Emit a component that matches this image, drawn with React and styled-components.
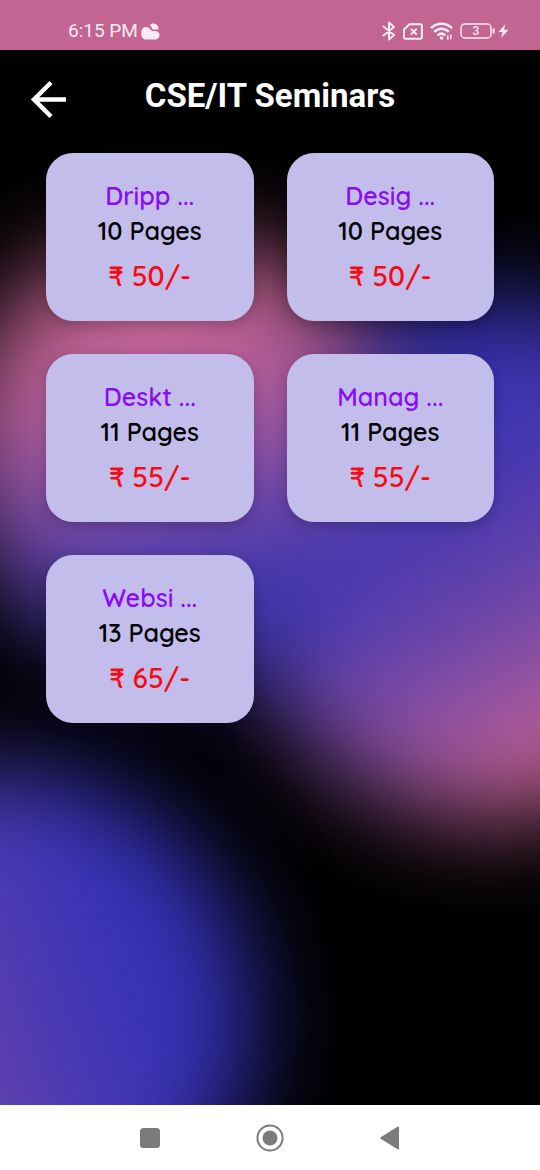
import React from "react";
import styled, { createGlobalStyle } from "styled-components";

const GlobalStyle = createGlobalStyle`
  *, *::before, *::after { box-sizing: border-box; }
  body { margin: 0; background: #000; }
  button { font: inherit; color: inherit; background: none; border: 0; padding: 0; cursor: pointer; }
`;

const Screen = styled.div`
  display: flex;
  flex-direction: column;
  min-height: 100vh;
  font-family: Roboto, sans-serif;
`;

const StatusBar = styled.div`
  display: flex;
  align-items: flex-end;
  justify-content: space-between;
  height: 50px;
  padding: 0 31px 8px 68px;
  background: #c36593;
  color: #fbeaf4;
`;

const StatusGroup = styled.div`
  display: flex;
  align-items: center;
  gap: ${({ $gap }) => $gap}px;
  height: 22px;
  svg { display: block; }
`;

const Clock = styled.time`
  font-size: 19px;
  line-height: 24px;
`;

const Page = styled.main`
  position: relative;
  isolation: isolate;
  flex: 1;
  background: #000;
`;

const Backdrop = styled.svg`
  position: absolute;
  inset: 0;
  width: 100%;
  height: 100%;
  z-index: -1;
`;

const Header = styled.header`
  display: grid;
  grid-template-columns: 1fr auto 1fr;
  align-items: center;
  height: 97px;
  padding: 0 30px;
`;

const BackButton = styled.button`
  justify-self: start;
  width: 38px;
  height: 40px;
  svg { display: block; }
`;

const Title = styled.h1`
  margin: 0;
  padding-bottom: 6px;
  color: #fff;
  font-size: 33px;
  line-height: 40px;
  font-weight: 700;
`;

const CardGrid = styled.ul`
  display: grid;
  grid-template-columns: 1fr 1fr;
  gap: 33px;
  margin: 0;
  padding: 6px 46px 33px;
  list-style: none;
`;

const Card = styled.a`
  display: flex;
  flex-direction: column;
  align-items: center;
  height: 168px;
  padding-top: 25px;
  border-radius: 27px;
  background: #c3bdeb;
  box-shadow: 0 4px 14px rgba(0, 0, 0, 0.22);
  font-family: Quicksand, Lato, "Noto Sans", sans-serif;
  text-decoration: none;
`;

const CardText = styled.span`
  color: ${({ $color }) => $color};
  font-size: 25px;
  line-height: 35px;
  font-weight: 600;
`;

const Price = styled(CardText)`
  font-size: 28px;
  line-height: 55px;
`;

const SystemNav = styled.nav`
  display: flex;
  justify-content: center;
  height: 65px;
  background: #fff;
  color: #7b7b7b;
`;

const NavButton = styled.button`
  display: flex;
  align-items: center;
  justify-content: center;
  width: 120px;
`;

const seminars = [
  { name: "Dripp ...", pages: 10, price: 50 },
  { name: "Desig ...", pages: 10, price: 50 },
  { name: "Deskt ...", pages: 11, price: 55 },
  { name: "Manag ...", pages: 11, price: 55 },
  { name: "Websi ...", pages: 13, price: 65 },
];

function GlowBackdrop() {
  return (
    <Backdrop viewBox="0 0 540 1055" preserveAspectRatio="xMidYMid slice" aria-hidden="true">
      <defs>
        <filter id="soft" x="-50%" y="-50%" width="200%" height="200%" colorInterpolationFilters="sRGB">
          <feGaussianBlur stdDeviation="48" />
        </filter>
        <linearGradient id="glowA" gradientUnits="userSpaceOnUse" x1="160" y1="210" x2="230" y2="560">
          <stop offset="0" stopColor="#c86694" />
          <stop offset="0.25" stopColor="#c46496" />
          <stop offset="0.5" stopColor="#9a559e" />
          <stop offset="0.78" stopColor="#5a40aa" />
          <stop offset="1" stopColor="#3c35b2" />
        </linearGradient>
        <linearGradient id="glowB" gradientUnits="userSpaceOnUse" x1="380" y1="300" x2="600" y2="715">
          <stop offset="0" stopColor="#3431b2" />
          <stop offset="0.3" stopColor="#4236b2" />
          <stop offset="0.58" stopColor="#6543aa" />
          <stop offset="0.82" stopColor="#a0569e" />
          <stop offset="1" stopColor="#d46890" />
        </linearGradient>
        <linearGradient id="glowC" gradientUnits="userSpaceOnUse" x1="-60" y1="1040" x2="165" y2="960">
          <stop offset="0" stopColor="#6a45aa" />
          <stop offset="0.5" stopColor="#4c3ab2" />
          <stop offset="1" stopColor="#3431b8" />
        </linearGradient>
      </defs>
      <circle cx="488" cy="508" r="260" fill="url(#glowB)" filter="url(#soft)" />
      <circle cx="172" cy="402" r="215" fill="url(#glowA)" filter="url(#soft)" />
      <circle cx="0" cy="970" r="252" fill="url(#glowC)" filter="url(#soft)" />
    </Backdrop>
  );
}

function CloudIcon() {
  return (
    <svg width="19" height="17" viewBox="0 0 19 17" fill="currentColor" aria-hidden="true">
      <path d="M5 16.500A4.600 4.600 0 0 1 .4 11.900V8.600A4.600 4.600 0 0 1 5 4c2.300 0 3.800 1.100 4.700 2.800.7 1.200 1.900 1.500 3.700 1.200 3.100-.4 5.100 1.500 5.100 4.200 0 2.500-1.900 4.300-4.400 4.300Z" />
      <path d="M8.800 2C11.400-.9 17 .2 17.500 5.200c.1 1.200-.5 1.500-1.400 1.300-1.100-.2-1.700-.1-2.800 0-1.200.1-2-.3-2.500-1.500-.4-1.100-1-2.100-2-3Z" />
    </svg>
  );
}

function BluetoothIcon() {
  return (
    <svg width="14" height="20" viewBox="0 0 14 20" fill="none" stroke="currentColor" strokeWidth="2" strokeLinejoin="round" strokeLinecap="round" aria-hidden="true">
      <path d="M1.500 5.500 12 14l-5 4.500v-17L12 6 1.500 14.500" />
    </svg>
  );
}

function SimIcon() {
  return (
    <svg width="20" height="17" viewBox="0 0 20 17" fill="none" stroke="currentColor" strokeWidth="2" strokeLinejoin="round" aria-hidden="true">
      <path d="M6.500 1.200H17.500A1.400 1.400 0 0 1 18.900 2.600V14.400A1.400 1.400 0 0 1 17.500 15.800H2.400A1.400 1.400 0 0 1 1 14.400V6.500Z" />
      <path d="m7.800 5.600 6 6m0-6-6 6" />
    </svg>
  );
}

function WifiIcon() {
  return (
    <svg width="23" height="18" viewBox="0 0 23 18" fill="none" stroke="currentColor" strokeWidth="2.500" aria-hidden="true">
      <path d="M1 6.200C7 .3 16 .3 22 6.200M4.200 9.900c4.200-4.200 10.400-4.200 14.600 0M7.600 13.400c2.400-2.200 5.400-2.200 7.800 0" />
      <circle cx="11.500" cy="16" r="1.800" fill="currentColor" stroke="none" />
      <path d="M17.800 17.800v-4.600M20.800 12.600v4.600" strokeWidth="1.600" />
    </svg>
  );
}

function BatteryIcon() {
  return (
    <svg width="35" height="16" viewBox="0 0 35 16" fill="none" stroke="currentColor" strokeWidth="1.500" aria-hidden="true">
      <rect x="1" y="1" width="30" height="14" rx="4" />
      <path d="M33.600 5.500v5" strokeWidth="2" />
      <text x="16" y="12" textAnchor="middle" fontFamily="Roboto" fontSize="12" fontWeight="500" fill="currentColor" stroke="none">3</text>
    </svg>
  );
}

function BoltIcon() {
  return (
    <svg width="11" height="14" viewBox="0 0 11 14" fill="currentColor" aria-hidden="true">
      <path d="M7.500 0 .5 8h4L3 14l7.500-8.300H6Z" />
    </svg>
  );
}

export default function App() {
  return (
    <>
      <GlobalStyle />
      <Screen>
        <StatusBar>
          <StatusGroup $gap={3}>
            <Clock>6:15 PM</Clock>
            <CloudIcon />
          </StatusGroup>
          <StatusGroup $gap={7}>
            <BluetoothIcon />
            <SimIcon />
            <WifiIcon />
            <StatusGroup $gap={3}>
              <BatteryIcon />
              <BoltIcon />
            </StatusGroup>
          </StatusGroup>
        </StatusBar>
        <Page>
          <GlowBackdrop />
          <Header>
            <BackButton type="button" aria-label="Back">
              <svg width="38" height="40" viewBox="0 0 38 40" fill="none" stroke="#fff" strokeWidth="4.500" aria-hidden="true">
                <path d="M36 20.500H5M21 3.500 4 20.500l17 17" />
              </svg>
            </BackButton>
            <Title>CSE/IT Seminars</Title>
          </Header>
          <CardGrid>
            {seminars.map(({ name, pages, price }) => (
              <li key={name}>
                <Card href="#">
                  <CardText $color="#8a0cf5">{name}</CardText>
                  <CardText $color="#000">{pages} Pages</CardText>
                  <Price $color="#f80a12">₹ {price}/-</Price>
                </Card>
              </li>
            ))}
          </CardGrid>
        </Page>
        <SystemNav aria-label="System">
          <NavButton type="button" aria-label="Recent apps">
            <svg width="20" height="20" viewBox="0 0 20 20" fill="currentColor" aria-hidden="true">
              <rect width="20" height="20" rx="3.500" />
            </svg>
          </NavButton>
          <NavButton type="button" aria-label="Home">
            <svg width="28" height="28" viewBox="0 0 28 28" aria-hidden="true">
              <circle cx="14" cy="14" r="12.600" fill="none" stroke="currentColor" strokeWidth="2" />
              <circle cx="14" cy="14" r="7.500" fill="currentColor" />
            </svg>
          </NavButton>
          <NavButton type="button" aria-label="Back">
            <svg width="20" height="24" viewBox="0 0 20 24" fill="currentColor" aria-hidden="true">
              <path d="M17.500.8Q19 0 19 1.500v21q0 1.500-1.500.7L1 13q-1.500-1 0-2Z" />
            </svg>
          </NavButton>
        </SystemNav>
      </Screen>
    </>
  );
}
